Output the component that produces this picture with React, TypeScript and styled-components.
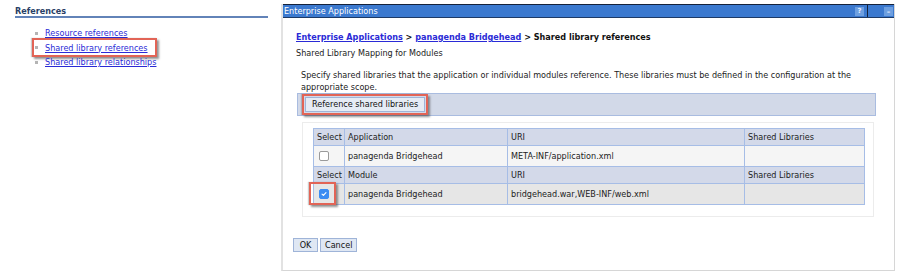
import React from 'react';
import styled, { createGlobalStyle } from 'styled-components';

const GlobalStyle = createGlobalStyle`
	html, body {
		margin: 0;
		padding: 0;
		background: #ffffff;
	}
	body {
		font-family: "DejaVu Sans", Verdana, sans-serif;
		font-size: 8.1px;
		color: #222;
	}
`;

const Page = styled.div`
	display: flex;
	align-items: flex-start;
	width: 900px;
	height: 279px;
	overflow: hidden;
`;

const Sidebar = styled.div`
	width: 253px;
	margin-left: 15px;
	padding-top: 7px;
`;

const SidebarTitle = styled.div`
	font-weight: bold;
	color: #2a3f66;
	padding-bottom: 0;
	border-bottom: 2px solid #6283b8;
	line-height: 9px;
`;

const LinkList = styled.ul`
	list-style: none;
	margin: 10px 0 0 17px;
	padding: 0;
	display: flex;
	flex-direction: column;
	gap: 4px;
`;

const LinkItem = styled.li<{ $highlight?: boolean }>`
	display: flex;
	align-items: center;
	gap: 7px;
	line-height: 10.5px;
	width: fit-content;
	&::before {
		content: '';
		width: 3px;
		height: 3px;
		background: #b4b4b4;
		margin-left: ${p => (p.$highlight ? '1px' : '3px')};
	}
	${p =>
		p.$highlight &&
		`
		border: 2px solid #e26456;
		padding: 3px 7px 2px 0;
		margin: -5px 0 -4px;
		box-shadow: 2px 2px 2px rgba(60, 60, 60, 0.55), -1px 0 1px rgba(60, 60, 60, 0.25);
	`}
`;

const Link = styled.a`
	color: #2a2ad6;
	text-decoration: underline;
	cursor: pointer;
`;

const Highlight = styled.span<{ $pad?: string; $margin?: string }>`
	display: inline-flex;
	align-items: center;
	padding: ${p => p.$pad || '2px'};
	margin: ${p => p.$margin || '0'};
	border: 2px solid #e26456;
	box-shadow: 2px 2px 2px rgba(60, 60, 60, 0.55), -1px 0 1px rgba(60, 60, 60, 0.25);
`;

const Panel = styled.div`
	width: 611px;
	height: 266px;
	margin-top: 4px;
	margin-left: 13px;
	border: 1px solid #d6d6d6;
	border-left: 2px solid #e2e2e2;
	border-top: none;
	display: flex;
	flex-direction: column;
`;

const TitleBar = styled.div`
	height: 12px;
	background: #3b79cf;
	border-top: 1px solid #15223a;
	border-bottom: 1px solid #1d3a66;
	display: flex;
	align-items: center;
	color: #ffffff;
	padding-left: 1px;
`;

const TitleText = styled.span`
	flex: 1;
	line-height: 12px;
`;

const TitleButton = styled.span<{ $dash?: boolean }>`
	width: 9px;
	height: 9px;
	margin-right: ${p => (p.$dash ? '1px' : '3px')};
	margin-left: ${p => (p.$dash ? '16px' : '0')};
	background: #6d9fe0;
	color: #e8f0ff;
	font-weight: bold;
	font-size: 7px;
	display: flex;
	align-items: ${p => (p.$dash ? 'flex-end' : 'center')};
	justify-content: center;
	line-height: 7px;
`;

const TitleDivider = styled.span`
	width: 1px;
	align-self: stretch;
	background: #15223a;
`;

const Body = styled.div`
	padding: 14px 0 0 13px;
	flex: 1;
	display: flex;
	flex-direction: column;
`;

const Breadcrumb = styled.div`
	font-weight: bold;
	color: #111;
	line-height: 10px;
	a {
		color: #2a2ad6;
		text-decoration: underline;
	}
`;

const SubTitle = styled.div`
	margin-top: 6px;
	line-height: 10px;
	color: #222;
`;

const Description = styled.p`
	margin: 12px 0 0 5px;
	width: 570px;
	line-height: 11.5px;
	color: #222;
`;

const ButtonBar = styled.div`
	margin-top: 0;
	margin-left: 1px;
	width: 579px;
	height: 23px;
	background: #d2d9e8;
	border: 1px solid #a9bce0;
	display: flex;
	align-items: center;
	padding-left: 7px;
	box-sizing: border-box;
`;

const Button = styled.button`
	font-family: "DejaVu Sans", Verdana, sans-serif;
	font-size: 8.1px;
	color: #111;
	background: #e6ecf5;
	border: 1px solid #9fb4d8;
	padding: 0 6px;
	height: 15px;
	line-height: 13px;
	cursor: pointer;
`;

const TableBox = styled.div`
	margin: 6px 0 0 6px;
	width: 572px;
	height: 95px;
	border: 1px solid #ececec;
	box-sizing: border-box;
	padding: 5px 0 0 10px;
`;

const Table = styled.table`
	border-collapse: collapse;
	border: 1px solid #a6bde6;
	width: 552px;
	table-layout: fixed;
`;

const HeadCell = styled.td<{ $w?: number }>`
	box-sizing: border-box;
	background: #d3d9e9;
	border: 1px solid #a6bde6;
	height: 17px;
	padding: 0 3px;
	color: #222;
	width: ${p => (p.$w ? `${p.$w}px` : 'auto')};
	white-space: nowrap;
`;

const Cell = styled.td<{ $shade?: boolean; $box?: boolean }>`
	box-sizing: border-box;
	background: ${p => (p.$shade ? '#e6e6e6' : '#f5f5f5')};
	border: 1px solid #a6bde6;
	height: 21px;
	padding: ${p => (p.$box ? '0 0 0 5px' : '0 3px')};
	color: #222;
	white-space: nowrap;
`;

const Checkbox = styled.span<{ $checked?: boolean }>`
	display: inline-flex;
	align-items: center;
	justify-content: center;
	width: 8px;
	height: 8px;
	border-radius: 2px;
	border: 1px solid ${p => (p.$checked ? '#3c8cf2' : '#9a9a9a')};
	background: ${p => (p.$checked ? '#3c8cf2' : '#ffffff')};
	vertical-align: middle;
`;

const Actions = styled.div`
	margin-top: 21px;
	margin-left: -3px;
	display: flex;
	gap: 2px;
`;

const SmallButton = styled(Button)`
	height: 14px;
	min-width: 25px;
	background: #dfe7f3;
	padding: 0 4px;
	line-height: 12px;
`;

const Check = () => (
	<svg width="6" height="6" viewBox="0 0 7 7">
		<path d="M1.2 3.7 L2.8 5.2 L5.8 1.8" fill="none" stroke="#ffffff" strokeWidth="1.3" strokeLinecap="round" strokeLinejoin="round" />
	</svg>
);

const App = () => {
	return (
		<Page>
			<GlobalStyle />
			<Sidebar>
				<SidebarTitle>References</SidebarTitle>
				<LinkList>
					<LinkItem><Link>Resource references</Link></LinkItem>
					<LinkItem $highlight><Link>Shared library references</Link></LinkItem>
					<LinkItem><Link>Shared library relationships</Link></LinkItem>
				</LinkList>
			</Sidebar>
			<Panel>
				<TitleBar>
					<TitleText>Enterprise Applications</TitleText>
					<TitleButton>?</TitleButton>
					<TitleDivider />
					<TitleButton $dash>–</TitleButton>
				</TitleBar>
				<Body>
					<Breadcrumb>
						<a>Enterprise Applications</a> &gt; <a>panagenda Bridgehead</a> &gt; Shared library references
					</Breadcrumb>
					<SubTitle>Shared Library Mapping for Modules</SubTitle>
					<Description>
						Specify shared libraries that the application or individual modules reference. These libraries must be defined in the configuration at the appropriate scope.
					</Description>
					<ButtonBar>
						<Highlight $pad="1px" $margin="-1px 0 0 -3px">
							<Button>Reference shared libraries</Button>
						</Highlight>
					</ButtonBar>
					<TableBox>
						<Table>
							<tbody>
								<tr>
									<HeadCell $w={31}>Select</HeadCell>
									<HeadCell $w={163}>Application</HeadCell>
									<HeadCell $w={237}>URI</HeadCell>
									<HeadCell>Shared Libraries</HeadCell>
								</tr>
								<tr>
									<Cell $box><Checkbox /></Cell>
									<Cell>panagenda Bridgehead</Cell>
									<Cell>META-INF/application.xml</Cell>
									<Cell />
								</tr>
								<tr>
									<HeadCell>Select</HeadCell>
									<HeadCell>Module</HeadCell>
									<HeadCell>URI</HeadCell>
									<HeadCell>Shared Libraries</HeadCell>
								</tr>
								<tr>
									<Cell $shade $box>
										<Highlight $pad="5px 5px 4px 8px" $margin="-8px -8px -8px -10px">
											<Checkbox $checked><Check /></Checkbox>
										</Highlight>
									</Cell>
									<Cell $shade>panagenda Bridgehead</Cell>
									<Cell $shade>bridgehead.war,WEB-INF/web.xml</Cell>
									<Cell $shade />
								</tr>
							</tbody>
						</Table>
					</TableBox>
					<Actions>
						<SmallButton>OK</SmallButton>
						<SmallButton>Cancel</SmallButton>
					</Actions>
				</Body>
			</Panel>
		</Page>
	);
};

export default App;
